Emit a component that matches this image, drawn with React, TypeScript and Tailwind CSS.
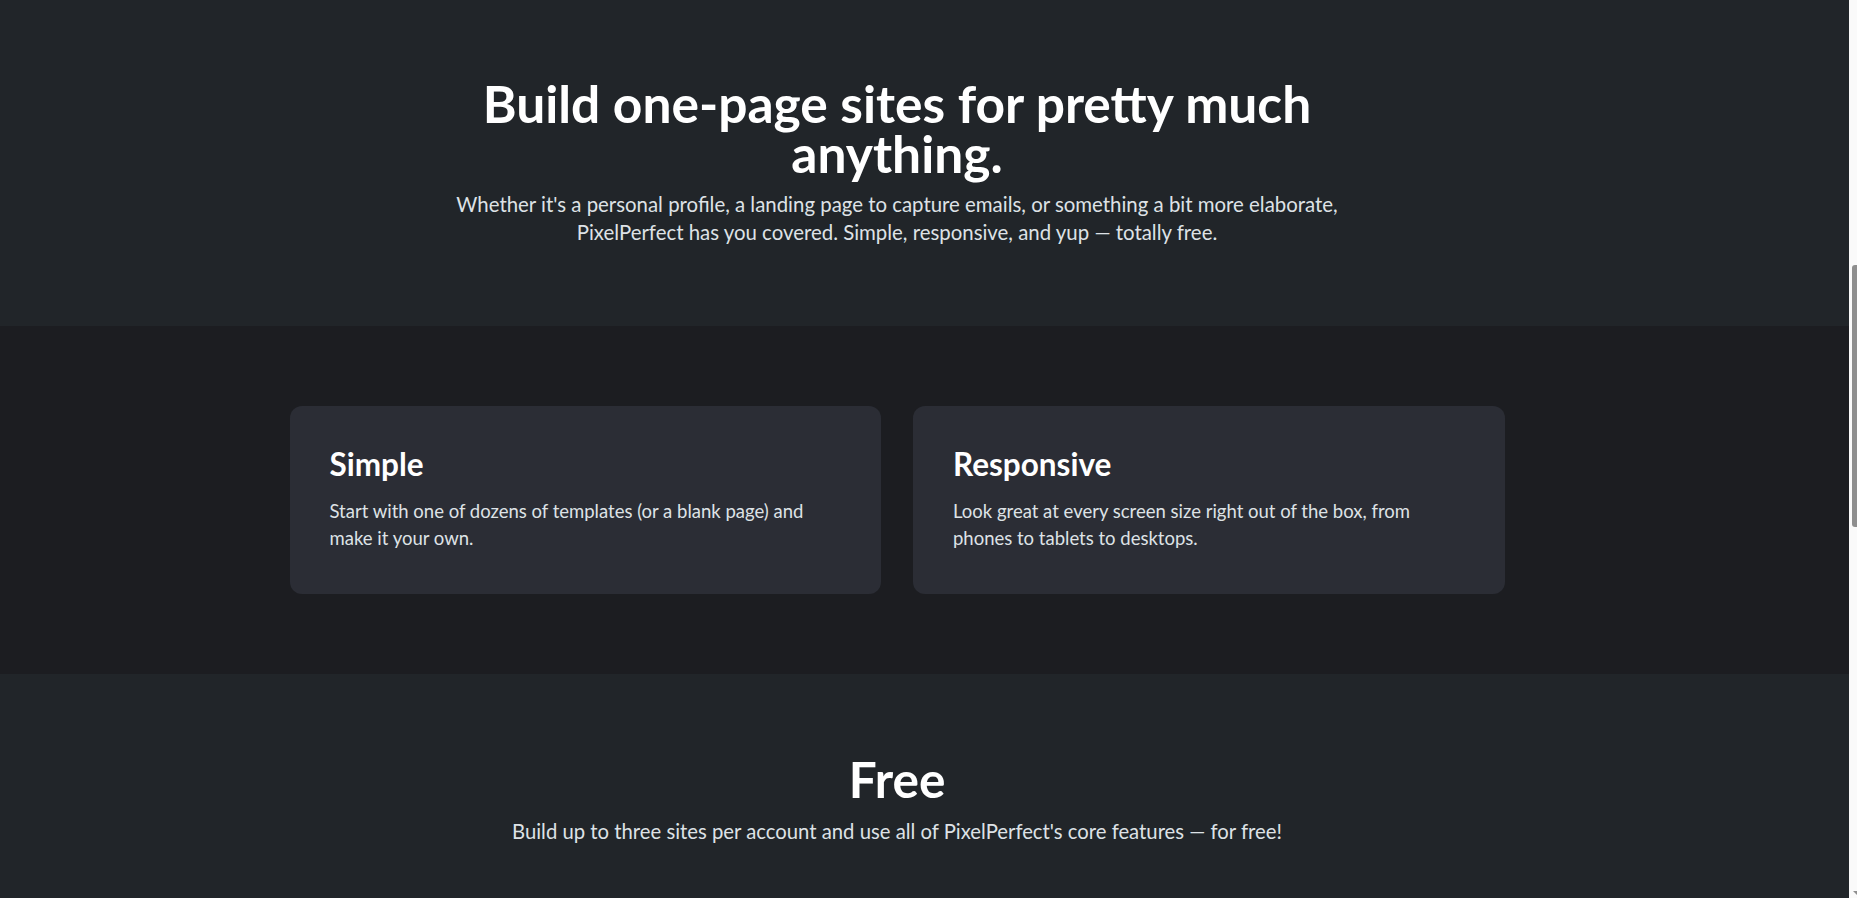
import React from "react";

function Scrollbar() {
  return (
    <div className="flex w-[8px] shrink-0 flex-col bg-[#fafafa]">
      <div className="h-[265px]" />
      <div className="ml-auto h-[262px] w-[5px] rounded-l-[3px] bg-[#8f8f8f]" />
      <div className="flex-1" />
      <div className="mb-[3px] ml-auto h-0 w-0 border-l-[4px] border-t-[4px] border-l-transparent border-t-[#8f8f8f]" />
    </div>
  );
}

export default function App() {
  const font = { fontFamily: 'Lato, "Noto Sans", sans-serif' };
  return (
    <div style={font} className="flex h-[898px] w-full overflow-hidden bg-[#212529] text-[#dee2e6]">
      <main className="min-w-0 flex-1">
        {/* Hero */}
        <section className="bg-[#212529] pt-[78px] pb-[80px]">
          <div className="mr-[55px] flex flex-col items-center text-center">
            <h1 className="text-[51.5px] leading-[50px] font-bold text-white">
              Build one-page sites for pretty much
              <br />
              anything.
            </h1>
            <p className="mt-3 text-[20.4px] leading-[28px] text-[#dee2e6]">
              Whether it's a personal profile, a landing page to capture emails, or something a bit more elaborate,
              <br />
              PixelPerfect has you covered. Simple, responsive, and yup — totally free.
            </p>
          </div>
        </section>

        {/* Features */}
        <section className="bg-[#1c1d21] pt-20 pb-[80px]">
          <div className="mr-[55px] flex justify-center">
            <div className="grid w-[1215px] grid-cols-2 gap-8">
              <div className="rounded-xl bg-[#2b2d35] px-10 pt-10 pb-[42px]">
                <h3 className="text-[31.5px] leading-[36px] font-bold text-white">Simple</h3>
                <p className="mt-4 text-[18.5px] leading-[27px] text-[#dee2e6]">
                  Start with one of dozens of templates (or a blank page) and
                  <br />
                  make it your own.
                </p>
              </div>
              <div className="rounded-xl bg-[#2b2d35] px-10 pt-10 pb-[42px]">
                <h3 className="text-[31.5px] leading-[36px] font-bold text-white">Responsive</h3>
                <p className="mt-4 text-[18.5px] leading-[27px] text-[#dee2e6]">
                  Look great at every screen size right out of the box, from
                  <br />
                  phones to tablets to desktops.
                </p>
              </div>
            </div>
          </div>
        </section>

        {/* Free */}
        <section className="bg-[#212529] pt-[81px] pb-[80px] min-h-[400px]">
          <div className="mr-[55px] flex flex-col items-center text-center">
            <h2 className="text-[49.5px] leading-[48px] font-bold text-white">Free</h2>
            <p className="mt-[14px] text-[20.3px] leading-[28px] text-[#dee2e6]">
              Build up to three sites per account and use all of PixelPerfect's core features — for free!
            </p>
          </div>
        </section>
      </main>
      <Scrollbar />
    </div>
  );
}
